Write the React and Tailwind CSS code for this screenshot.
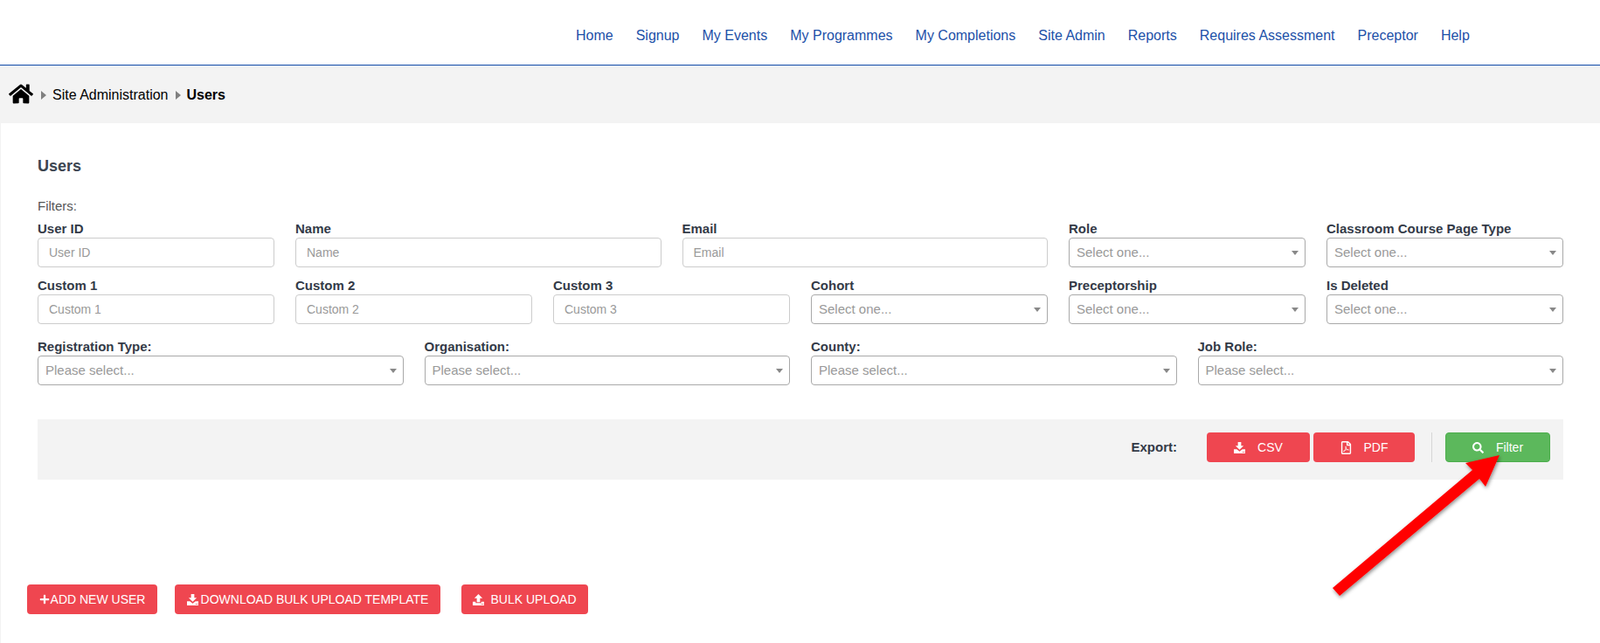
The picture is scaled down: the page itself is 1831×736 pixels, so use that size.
import React from "react";
import { FaHome, FaRegFilePdf, FaSearch, FaPlus } from "react-icons/fa";

const navLinks = [
  "Home",
  "Signup",
  "My Events",
  "My Programmes",
  "My Completions",
  "Site Admin",
  "Reports",
  "Requires Assessment",
  "Preceptor",
  "Help",
];

const rowOne = [
  { label: "User ID", placeholder: "User ID", span: "col-span-2" },
  { label: "Name", placeholder: "Name", span: "col-span-3" },
  { label: "Email", placeholder: "Email", span: "col-span-3" },
  { label: "Role", select: "Select one...", span: "col-span-2" },
  { label: "Classroom Course Page Type", select: "Select one...", span: "col-span-2" },
];

const rowTwo = [
  { label: "Custom 1", placeholder: "Custom 1", span: "col-span-2" },
  { label: "Custom 2", placeholder: "Custom 2", span: "col-span-2" },
  { label: "Custom 3", placeholder: "Custom 3", span: "col-span-2" },
  { label: "Cohort", select: "Select one...", span: "col-span-2" },
  { label: "Preceptorship", select: "Select one...", span: "col-span-2" },
  { label: "Is Deleted", select: "Select one...", span: "col-span-2" },
];

const rowThree = [
  { label: "Registration Type:", select: "Please select...", span: "col-span-3" },
  { label: "Organisation:", select: "Please select...", span: "col-span-3" },
  { label: "County:", select: "Please select...", span: "col-span-3" },
  { label: "Job Role:", select: "Please select...", span: "col-span-3" },
];

// glyphicon style tray icons, the tray has two little dots on the right
const DownloadIcon = ({ className }) => (
  <svg viewBox="0 0 14 14" className={className} fill="currentColor">
    <path d="M5 0h4v4.5h3L7 9.5l-5-5h3z" />
    <path
      fillRule="evenodd"
      d="M0 9h3.5L7 11.5 10.5 9H14v5H0zM10.5 11.8v1h1v-1zM12.3 11.8v1h1v-1z"
    />
  </svg>
);

const UploadIcon = ({ className }) => (
  <svg viewBox="0 0 14 14" className={className} fill="currentColor">
    <path d="M7 0l5 5H9v5H5V5H2z" />
    <path
      fillRule="evenodd"
      d="M0 9.5h3.5V11h7V9.5H14V14H0zM10.5 11.9v1h1v-1zM12.3 11.9v1h1v-1z"
    />
  </svg>
);

function Field({ label, placeholder, select, span }) {
  return (
    <div className={span}>
      <label className="block h-[17px] text-[15px] leading-[15px] font-bold text-[#333a47] whitespace-nowrap">
        {label}
      </label>
      {select ? (
        <div className="mt-[1px] h-[34px] pt-[1px] flex items-center justify-between pl-2 pr-[7px] bg-white border border-[#a9a9a9] rounded-[4px] text-[15px] text-[#999999]">
          <span>{select}</span>
          <span className="w-0 h-0 border-x-[4px] border-x-transparent border-t-[5px] border-t-[#888888]"></span>
        </div>
      ) : (
        <input
          placeholder={placeholder}
          className="mt-[1px] block w-full h-[34px] px-3 bg-white border border-[#cccccc] rounded-[4px] text-[14px] placeholder:text-[#999999]"
        />
      )}
    </div>
  );
}

export default function App() {
  return (
    <div className="relative h-[736px] overflow-hidden bg-white font-['Liberation_Sans',Arial,sans-serif]">
      <header className="h-[75px] flex border-b border-[#0f4aa8]">
        <nav className="ml-[659px] mt-[31px] flex gap-[26px] text-[16px] leading-[20px] text-[#1c50a8]">
          {navLinks.map((link) => (
            <a key={link} className="whitespace-nowrap">
              {link}
            </a>
          ))}
        </nav>
      </header>

      <div className="h-[66px] pl-[10px] pt-[2px] flex items-center bg-[#f3f3f3] text-[16px]">
        <FaHome className="w-[28px] h-[25px] text-black -mt-[4px]" />
        <span className="ml-[9px] mr-[7px] w-0 h-0 border-y-[5px] border-y-transparent border-l-[6px] border-l-[#808080]"></span>
        <span className="text-black">Site Administration</span>
        <span className="ml-[8px] mr-[7px] w-0 h-0 border-y-[5px] border-y-transparent border-l-[6px] border-l-[#808080]"></span>
        <span className="font-bold text-black">Users</span>
      </div>

      <main className="border-l border-[#f3f3f3] h-[595px] pl-[42px] pr-[42px]">
        <h2 className="pt-[39px] text-[18px] leading-[20px] font-bold text-[#3c4450]">Users</h2>
        <div className="mt-[27px] text-[15px] leading-[17px] text-[#555555]">Filters:</div>

        <div className="mt-[10px] grid grid-cols-12 gap-x-6">
          {rowOne.map((f) => (
            <Field key={f.label} {...f} />
          ))}
        </div>
        <div className="mt-[13px] grid grid-cols-12 gap-x-6">
          {rowTwo.map((f) => (
            <Field key={f.label} {...f} />
          ))}
        </div>
        <div className="mt-[18px] grid grid-cols-12 gap-x-6">
          {rowThree.map((f) => (
            <Field key={f.label} {...f} />
          ))}
        </div>

        <div className="mt-[39px] h-[69px] pr-[15px] pb-[5px] flex items-center justify-end bg-[#f3f3f3]">
          <span className="mr-[34px] text-[15px] font-bold text-[#333a47]">Export:</span>
          <button className="w-[118px] h-[34px] flex items-center justify-center gap-[14px] rounded-[4px] bg-[#ef4650] text-white text-[14px]">
            <DownloadIcon className="w-[13px] h-[13px]" />
            CSV
          </button>
          <button className="ml-[4px] w-[116px] h-[34px] flex items-center justify-center gap-[14px] rounded-[4px] bg-[#ef4650] text-white text-[14px]">
            <FaRegFilePdf className="w-[13px] h-[15px]" />
            PDF
          </button>
          <span className="ml-[19px] mr-[15px] w-px h-[34px] bg-[#d6d6d6]"></span>
          <button className="w-[120px] h-[34px] flex items-center justify-center gap-[14px] rounded-[4px] bg-[#5cb85c] border border-[#4cae4c] text-white text-[14px]">
            <FaSearch className="w-[13px] h-[13px]" />
            Filter
          </button>
        </div>

        <div className="mt-[120px] -ml-[12px] flex text-[14px] text-white">
          <button className="w-[149px] h-[34px] flex items-center justify-center gap-[1px] rounded-[4px] bg-[#ef4650]">
            <FaPlus className="w-[12px] h-[12px]" />
            ADD NEW USER
          </button>
          <button className="ml-[20px] w-[304px] h-[34px] flex items-center justify-center gap-[3px] rounded-[4px] bg-[#ef4650]">
            <DownloadIcon className="w-[13px] h-[13px]" />
            DOWNLOAD BULK UPLOAD TEMPLATE
          </button>
          <button className="ml-[24px] w-[145px] h-[34px] flex items-center justify-center gap-[7px] rounded-[4px] bg-[#ef4650]">
            <UploadIcon className="w-[13px] h-[13px]" />
            BULK UPLOAD
          </button>
        </div>
      </main>

      {/* annotation arrow drawn over the page */}
      <svg className="absolute left-[1500px] top-[500px] w-[240px] h-[200px] pointer-events-none" viewBox="1500 500 240 200">
        <defs>
          <filter id="arrowShadow" x="-20%" y="-20%" width="140%" height="140%">
            <feDropShadow dx="1" dy="2" stdDeviation="2" floodColor="#000" floodOpacity="0.45" />
          </filter>
        </defs>
        <polygon
          points="1525,673 1533,682 1693,548 1700,557 1716,521 1677,530 1685,538"
          fill="#ff0000"
          filter="url(#arrowShadow)"
        />
      </svg>
    </div>
  );
}
